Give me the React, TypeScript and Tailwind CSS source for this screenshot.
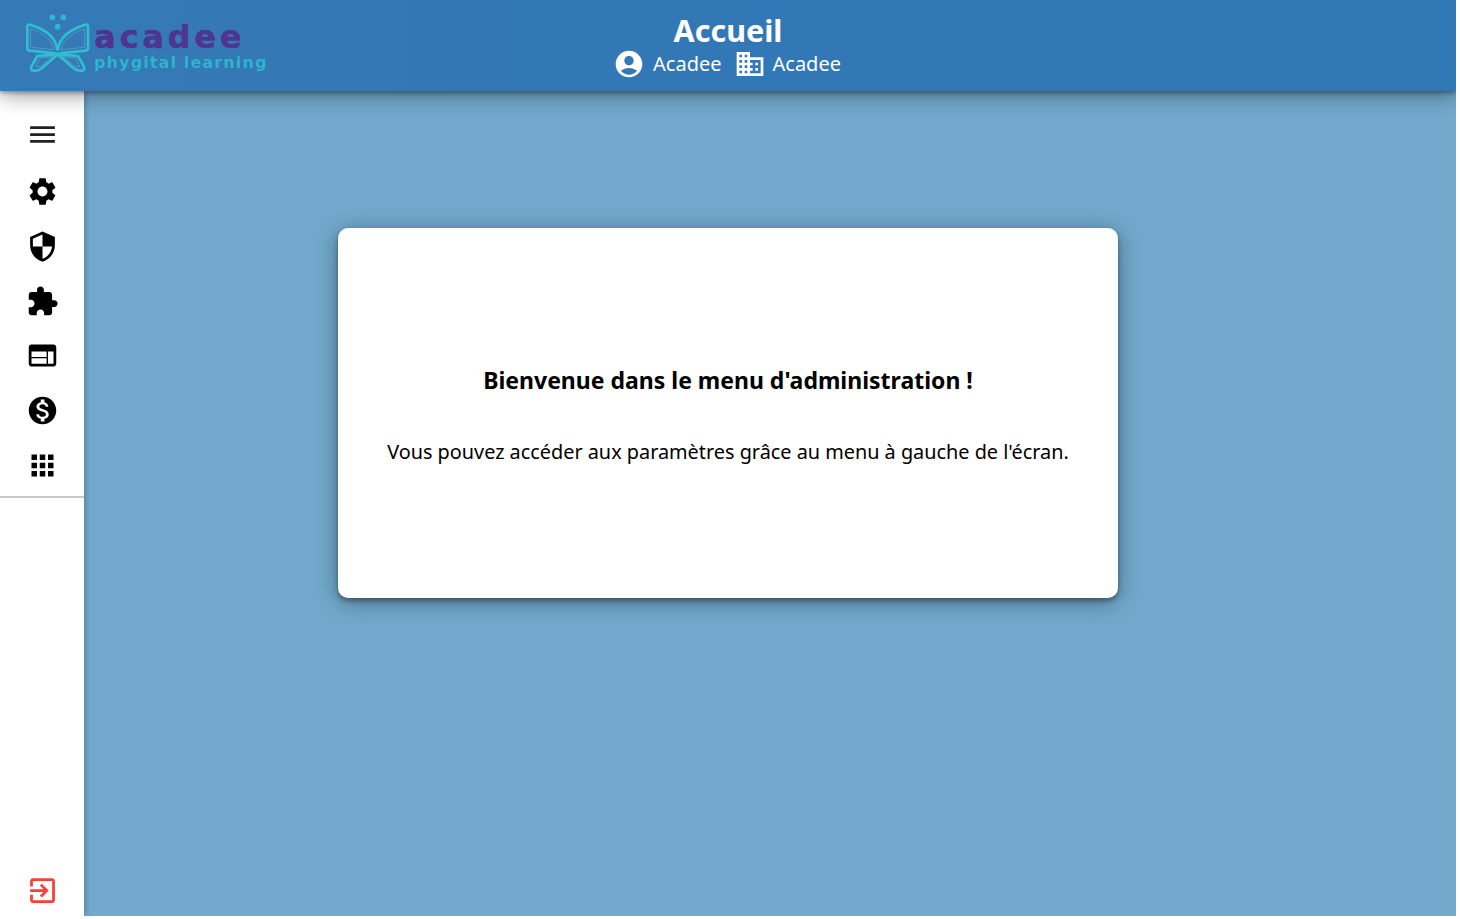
import React from "react";

const P: Record<string, string> = {
  menu: "M3 18h18v-2H3v2zm0-5h18v-2H3v2zm0-7v2h18V6H3z",
  settings: "M19.14 12.94c.04-.3.06-.61.06-.94 0-.32-.02-.64-.07-.94l2.03-1.58c.18-.14.23-.41.12-.61l-1.92-3.32c-.12-.22-.37-.29-.59-.22l-2.39.96c-.5-.38-1.03-.7-1.62-.94l-.36-2.54c-.04-.24-.24-.41-.48-.41h-3.84c-.24 0-.43.17-.47.41l-.36 2.54c-.59.24-1.13.57-1.62.94l-2.39-.96c-.22-.08-.47 0-.59.22L2.74 8.87c-.12.21-.08.47.12.61l2.03 1.58c-.05.3-.09.63-.09.94s.02.64.07.94l-2.03 1.58c-.18.14-.23.41-.12.61l1.92 3.32c.12.22.37.29.59.22l2.39-.96c.5.38 1.03.7 1.62.94l.36 2.54c.05.24.24.41.48.41h3.84c.24 0 .44-.17.47-.41l.36-2.54c.59-.24 1.13-.56 1.62-.94l2.39.96c.22.08.47 0 .59-.22l1.92-3.32c.12-.22.07-.47-.12-.61l-2.01-1.58zM12 15.6c-1.98 0-3.6-1.62-3.6-3.6s1.62-3.6 3.6-3.6 3.6 1.62 3.6 3.6-1.62 3.6-3.6 3.6z",
  security: "M12 1L3 5v6c0 5.55 3.84 10.74 9 12 5.16-1.26 9-6.45 9-12V5l-9-4zm0 10.99h7c-.53 4.12-3.28 7.79-7 8.94V12H5V6.3l7-3.11v8.8z",
  extension: "M20.5 11H19V7c0-1.1-.9-2-2-2h-4V3.5C13 2.12 11.88 1 10.5 1S8 2.12 8 3.5V5H4c-1.1 0-1.99.9-1.99 2v3.8H3.5c1.49 0 2.7 1.21 2.7 2.7s-1.21 2.7-2.7 2.7H2V20c0 1.1.9 2 2 2h3.8v-1.5c0-1.49 1.21-2.7 2.7-2.7 1.49 0 2.7 1.21 2.7 2.7V22H17c1.1 0 2-.9 2-2v-4h1.5c1.38 0 2.5-1.12 2.5-2.5S21.88 11 20.5 11z",
  web: "M20 4H4c-1.1 0-1.99.9-1.99 2L2 18c0 1.1.9 2 2 2h16c1.1 0 2-.9 2-2V6c0-1.1-.9-2-2-2zm-5 14H4v-4h11v4zm0-5H4V9h11v4zm5 5h-4V9h4v9z",
  money: "M12 2C6.48 2 2 6.48 2 12s4.48 10 10 10 10-4.48 10-10S17.52 2 12 2zm1.41 16.09V20h-2.67v-1.93c-1.71-.36-3.16-1.46-3.27-3.4h1.96c.1 1.05.82 1.87 2.65 1.87 1.96 0 2.4-.98 2.4-1.59 0-.83-.44-1.61-2.67-2.14-2.48-.6-4.18-1.62-4.18-3.67 0-1.72 1.39-2.84 3.11-3.21V4h2.67v1.95c1.86.45 2.79 1.86 2.85 3.39H14.3c-.05-1.11-.64-1.87-2.22-1.87-1.5 0-2.4.68-2.4 1.64 0 .84.65 1.39 2.67 1.91s4.18 1.39 4.18 3.91c-.01 1.83-1.38 2.83-3.12 3.16z",
  apps: "M4 8h4V4H4v4zm6 12h4v-4h-4v4zm-6 0h4v-4H4v4zm0-6h4v-4H4v4zm6 0h4v-4h-4v4zm6-10v4h4V4h-4zm-6 4h4V4h-4v4zm6 6h4v-4h-4v4zm0 6h4v-4h-4v4z",
  account: "M12 2C6.48 2 2 6.48 2 12s4.48 10 10 10 10-4.48 10-10S17.52 2 12 2zm0 4c1.93 0 3.5 1.57 3.5 3.5S13.93 13 12 13s-3.5-1.57-3.5-3.5S10.07 6 12 6zm0 14c-2.03 0-4.43-.82-6.14-2.88C7.55 15.8 9.68 15 12 15s4.45.8 6.14 2.12C16.43 19.18 14.03 20 12 20z",
  domain: "M12 7V3H2v18h20V7H12zM6 19H4v-2h2v2zm0-4H4v-2h2v2zm0-4H4V9h2v2zm0-4H4V5h2v2zm4 12H8v-2h2v2zm0-4H8v-2h2v2zm0-4H8V9h2v2zm0-4H8V5h2v2zm10 12h-8v-2h2v-2h-2v-2h2v-2h-2V9h8v10zm-2-8h-2v2h2v-2zm0 4h-2v2h2v-2z",
  exit: "M10.09 15.59L11.5 17l5-5-5-5-1.41 1.41L12.67 11H3v2h9.67l-2.58 2.59zM19 3H5c-1.11 0-2 .9-2 2v4h2V5h14v14H5v-4H3v4c0 1.1.89 2 2 2h14c1.1 0 2-.9 2-2V5c0-1.1-.9-2-2-2z",
};

function Icon({ name, className }: { name: string; className: string }) {
  return (
    <svg viewBox="0 0 24 24" fill="currentColor" className={className}>
      <path d={P[name]} />
    </svg>
  );
}

function Wing() {
  return (
    <g fill="none" strokeLinejoin="round" strokeLinecap="round">
      <path d="M112 118C108 88 84 60 30 44Q22 42 22 51L22 114Q22 122 30 122L108 130" stroke="#2cc0d2" strokeWidth="8" />
      <path d="M33 57C70 68 96 88 103 119L33 112Z" stroke="#8fd0e0" strokeWidth="1.500" opacity="0.7" />
      <path d="M100 134L52 138L34 170Q30 182 42 182L52 181Q60 180 66 174L112 134" stroke="#2cc0d2" strokeWidth="8" />
      <path d="M96 140L60 144L47 170L60 169Z" stroke="#8fd0e0" strokeWidth="1.500" opacity="0.7" />
    </g>
  );
}

function Logo() {
  return (
    <div className="flex items-start pl-[20px] pt-[10px] w-[300px] blur-[0.35px]">
      <svg viewBox="0 0 228 198" className="w-[76px] h-[66px] shrink-0">
        <circle cx="97" cy="22" r="8.500" fill="#2cb8d0" />
        <circle cx="130" cy="22" r="8.500" fill="#2cb8d0" />
        <circle cx="113" cy="50" r="8.500" fill="#2cb8d0" />
        <Wing />
        <g transform="translate(226 0) scale(-1 1)">
          <Wing />
        </g>
      </svg>
      <div className="-ml-[2px] pt-[12px] font-['DejaVu_Sans',sans-serif] font-bold">
        <div className="text-[32px] leading-[30px] tracking-[3.800px] text-[#4f3591] [-webkit-text-stroke:0.6px_#4f3591]">acadee</div>
        <div className="mt-[2px] text-[16px] leading-[18px] tracking-[1.120px] text-[#2bb5cf]">phygital learning</div>
      </div>
    </div>
  );
}

const side = ["settings", "security", "extension", "web", "money", "apps"];

export default function App() {
  return (
    <div className="w-[1456px] h-[916px] flex flex-col bg-[#72a9cc] font-['Noto_Sans','Open_Sans',sans-serif] overflow-hidden">
      <header className="relative z-20 h-[91px] shrink-0 bg-gradient-to-r from-[#3579b6] to-[#3077b5] shadow-[0_2px_4px_rgba(0,0,0,0.3),0_4px_20px_rgba(0,0,0,0.4)] flex">
        <Logo />
        <div className="absolute inset-x-0 top-[11px] flex flex-col items-center text-white">
          <div className="text-[30.500px] leading-[38px] font-bold">Accueil</div>
          <div className="flex items-center h-[28px] text-[20px] pr-[2px] mt-[1px]">
            <Icon name="account" className="w-[32px] h-[32px]" />
            <span className="ml-[8px]">Acadee</span>
            <Icon name="domain" className="w-[32px] h-[32px] ml-[12px]" />
            <span className="ml-[7px]">Acadee</span>
          </div>
        </div>
      </header>
      <div className="flex flex-1 min-h-0">
        <aside className="relative z-10 w-[84px] shrink-0 bg-white shadow-[2px_0_5px_rgba(0,0,0,0.2)] flex flex-col text-black">
          <div className="h-[407px] w-full flex flex-col items-center pl-[1px] border-b-2 border-[#c8c8c8] pt-[27px]">
            <Icon name="menu" className="w-[33px] h-[33px] text-[#222] mb-[24px]" />
            <div className="flex flex-col gap-[21.800px]">
              {side.map((n) => (
                <Icon key={n} name={n} className="w-[33px] h-[33px]" />
              ))}
            </div>
          </div>
          <div className="mt-auto pb-[9px] pl-[1px] flex justify-center">
            <Icon name="exit" className="w-[33px] h-[33px] text-[#f44336]" />
          </div>
        </aside>
        <main className="flex-1 pl-[254px] pt-[137px]">
          <section className="w-[780px] h-[370px] bg-white rounded-[10px] shadow-[0_3px_5px_rgba(0,0,0,0.35),0_4px_24px_rgba(0,0,0,0.35)] flex flex-col items-center text-black">
            <h1 className="mt-[135px] text-[23px] leading-[34px] font-bold">Bienvenue dans le menu d'administration !</h1>
            <p className="mt-[41px] text-[19.850px] leading-[28px]">Vous pouvez accéder aux paramètres grâce au menu à gauche de l'écran.</p>
          </section>
        </main>
      </div>
    </div>
  );
}
